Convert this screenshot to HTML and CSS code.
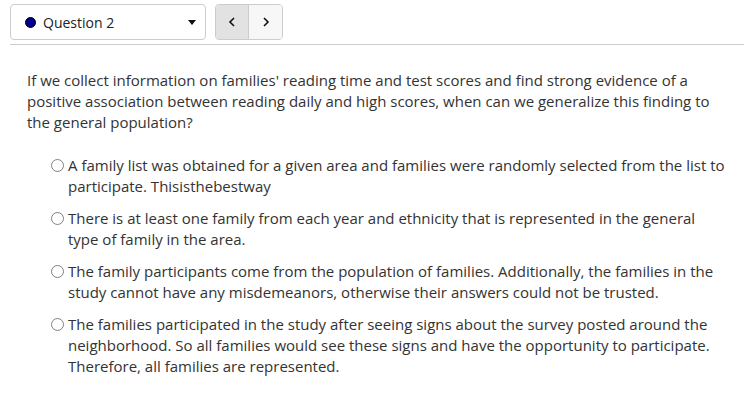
FILE: index.html
```html
<!DOCTYPE html>
<html>
<head>
<meta charset="utf-8">
<link rel="stylesheet" href="styles.css">
</head>
<body>
<div class="header">
  <div class="select">
    <span class="dot"></span>
    <span class="select-label">Question 2</span>
    <span class="caret"></span>
  </div>
  <div class="nav">
    <button class="nav-btn prev"><svg width="8" height="12" viewBox="0 0 8 12"><path d="M6 2 L2 6 L6 10" fill="none" stroke="#111" stroke-width="1.6"/></svg></button>
    <button class="nav-btn next"><svg width="8" height="12" viewBox="0 0 8 12"><path d="M2 2 L6 6 L2 10" fill="none" stroke="#111" stroke-width="1.6"/></svg></button>
  </div>
</div>
<div class="content">
  <p class="question">If we collect information on families' reading time and test scores and find strong evidence of a positive association between reading daily and high scores, when can we generalize this finding to the general population?</p>
  <ul class="options">
    <li class="option"><span class="radio"></span><span class="opt-text">A family list was obtained for a given area and families were randomly selected from the list to participate. Thisisthebestway</span></li>
    <li class="option"><span class="radio"></span><span class="opt-text">There is at least one family from each year and ethnicity that is represented in the general type of family in the area.</span></li>
    <li class="option"><span class="radio"></span><span class="opt-text">The family participants come from the population of families. Additionally, the families in the study cannot have any misdemeanors, otherwise their answers could not be trusted.</span></li>
    <li class="option"><span class="radio"></span><span class="opt-text">The families participated in the study after seeing signs about the survey posted around the neighborhood. So all families would see these signs and have the opportunity to participate. Therefore, all families are represented.</span></li>
  </ul>
</div>
</body>
</html>
```
FILE: styles.css
```css
* { box-sizing: border-box; }
html, body { margin: 0; padding: 0; background: #fff; }
body {
  font-family: "Open Sans", "Liberation Sans", sans-serif;
  color: #333;
  width: 744px;
  height: 406px;
  overflow: hidden;
}
.header {
  display: flex;
  align-items: center;
  gap: 9px;
  margin-left: 10px;
  padding: 4px 0 4px 0;
  border-bottom: 1px solid #ccc;
  height: 45px;
}
.select {
  width: 196px;
  height: 36px;
  border: 1px solid #ccc;
  border-radius: 4px;
  display: flex;
  align-items: center;
  padding: 0 9px 0 14px;
}
.dot {
  width: 11px;
  height: 11px;
  border-radius: 50%;
  background: #00008b;
  border: 1px solid #000;
  margin-right: 7px;
}
.select-label {
  font-size: 14px;
  color: #222;
  flex: 1;
}
.caret {
  width: 0;
  height: 0;
  border-left: 4px solid transparent;
  border-right: 4px solid transparent;
  border-top: 5px solid #111;
}
.nav {
  display: flex;
  height: 36px;
  border: 1px solid #ccc;
  border-radius: 4px;
  overflow: hidden;
}
.nav-btn {
  width: 33px;
  height: 100%;
  border: 0;
  padding: 0;
  display: flex;
  align-items: center;
  justify-content: center;
  background: #f7f7f7;
}
.nav-btn.prev {
  background: #e2e2e2;
  border-right: 1px solid #ccc;
}
.content {
  padding: 25px 17px 0 27px;
}
.question {
  margin: 0;
  font-size: 15px;
  line-height: 21px;
  max-width: 690px;
}
.options {
  list-style: none;
  margin: 22px 0 0 0;
  padding: 0 0 0 24px;
}
.option {
  display: flex;
  align-items: flex-start;
  font-size: 15px;
  line-height: 21px;
  margin-bottom: 11px;
}
.radio {
  flex: none;
  width: 13px;
  height: 13px;
  border: 1px solid #808080;
  border-radius: 50%;
  margin-top: 4px;
  margin-right: 4px;
}
.opt-text { flex: 1; }
```
